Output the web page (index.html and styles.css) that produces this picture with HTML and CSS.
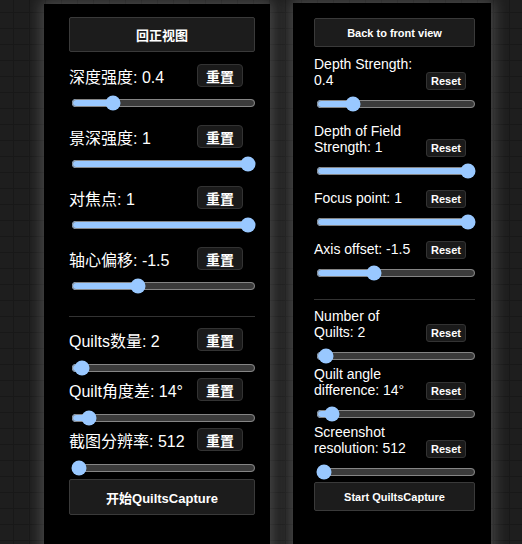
FILE: index.html
```html
<!DOCTYPE html>
<html lang="zh">
<head>
<meta charset="utf-8">
<title>Quilts</title>
<link rel="stylesheet" href="styles.css">
</head>
<body>
<div class="stage">
  <div class="panel panel-zh">
    <button class="wide-btn">回正视图</button>
    <div class="section-a">
      <div class="group">
        <div class="row"><span class="label">深度强度: 0.4</span><button class="reset">重置</button></div>
        <input class="range" type="range" min="0" max="2" step="0.1" value="0.4">
      </div>
      <div class="group">
        <div class="row"><span class="label">景深强度: 1</span><button class="reset">重置</button></div>
        <input class="range" type="range" min="0" max="1" step="0.1" value="1">
      </div>
      <div class="group">
        <div class="row"><span class="label">对焦点: 1</span><button class="reset">重置</button></div>
        <input class="range" type="range" min="0" max="1" step="0.1" value="1">
      </div>
      <div class="group">
        <div class="row"><span class="label">轴心偏移: -1.5</span><button class="reset">重置</button></div>
        <input class="range" type="range" min="-5" max="5" step="0.1" value="-1.5">
      </div>
    </div>
    <hr class="sep">
    <div class="section-b">
      <div class="group">
        <div class="row"><span class="label">Quilts数量: 2</span><button class="reset">重置</button></div>
        <input class="range" type="range" min="1" max="60" step="1" value="2">
      </div>
      <div class="group">
        <div class="row"><span class="label">Quilt角度差: 14°</span><button class="reset">重置</button></div>
        <input class="range" type="range" min="10" max="80" step="1" value="14">
      </div>
      <div class="group">
        <div class="row"><span class="label">截图分辨率: 512</span><button class="reset">重置</button></div>
        <input class="range" type="range" min="512" max="4096" step="64" value="512">
      </div>
    </div>
    <button class="wide-btn start">开始QuiltsCapture</button>
  </div>

  <div class="panel panel-en">
    <button class="wide-btn">Back to front view</button>
    <div class="section-a">
      <div class="group">
        <div class="row"><span class="label">Depth Strength: 0.4</span><button class="reset">Reset</button></div>
        <input class="range" type="range" min="0" max="2" step="0.1" value="0.4">
      </div>
      <div class="group">
        <div class="row"><span class="label">Depth of Field Strength: 1</span><button class="reset">Reset</button></div>
        <input class="range" type="range" min="0" max="1" step="0.1" value="1">
      </div>
      <div class="group">
        <div class="row"><span class="label">Focus point: 1</span><button class="reset">Reset</button></div>
        <input class="range" type="range" min="0" max="1" step="0.1" value="1">
      </div>
      <div class="group">
        <div class="row"><span class="label">Axis offset: -1.5</span><button class="reset">Reset</button></div>
        <input class="range" type="range" min="-5" max="5" step="0.1" value="-1.5">
      </div>
    </div>
    <hr class="sep">
    <div class="section-b">
      <div class="group">
        <div class="row"><span class="label">Number of Quilts: 2</span><button class="reset">Reset</button></div>
        <input class="range" type="range" min="1" max="60" step="1" value="2">
      </div>
      <div class="group">
        <div class="row"><span class="label">Quilt angle difference: 14°</span><button class="reset">Reset</button></div>
        <input class="range" type="range" min="10" max="80" step="1" value="14">
      </div>
      <div class="group">
        <div class="row"><span class="label">Screenshot resolution: 512</span><button class="reset">Reset</button></div>
        <input class="range" type="range" min="512" max="4096" step="64" value="512">
      </div>
    </div>
    <button class="wide-btn start">Start QuiltsCapture</button>
  </div>
</div>
</body>
</html>
```

FILE: styles.css
```css
html, body {
  margin: 0;
  height: 100%;
}

body {
  overflow: hidden;
  background-color: #1e1e1e;
  background-image:
    linear-gradient(#181818 1px, transparent 1px),
    linear-gradient(90deg, #181818 1px, transparent 1px);
  background-size: 16px 16px;
  background-position: 13px 12px;
  font-family: "Liberation Sans", "Noto Sans CJK SC", sans-serif;
  color: #fff;
}

.stage {
  display: flex;
  align-items: flex-start;
  gap: 23px;
  padding: 3px 0 0 44px;
}

.panel {
  background: #000;
  box-shadow: 0 0 14px 3px rgba(255, 255, 255, 0.2);
  height: 560px;
  box-sizing: border-box;
  display: flex;
  flex-direction: column;
  flex: none;
}

.panel-zh {
  width: 226px;
  margin-top: 1px;
  padding: 13px 15px 0 25px;
}

.panel-en {
  width: 198px;
  padding: 15px 16px 0 21px;
}

.wide-btn {
  display: block;
  width: 100%;
  box-sizing: border-box;
  background: #1c1c1c;
  border: 1px solid #3a3a3a;
  border-radius: 2px;
  color: #fff;
  font-family: inherit;
  font-weight: bold;
  padding: 0;
  flex: none;
}

.panel-zh .wide-btn {
  height: 35px;
  font-size: 13px;
}

.panel-en .wide-btn {
  height: 29px;
  font-size: 11px;
}

.section-a,
.section-b {
  display: flex;
  flex-direction: column;
}

.panel-zh .section-a {
  margin-top: 12px;
  gap: 12px;
}

.panel-en .section-a {
  margin-top: 9px;
  gap: 9px;
}

.row {
  display: flex;
  gap: 10px;
}

.panel-zh .row {
  align-items: center;
  height: 23px;
  padding-right: 12px;
}

.panel-en .row {
  align-items: last baseline;
  padding-right: 9px;
}

.label {
  flex: 1;
  min-width: 0;
}

.panel-zh .label {
  font-size: 16px;
}

.panel-en .label {
  font-size: 14px;
  line-height: 16px;
}

.reset {
  flex: none;
  box-sizing: border-box;
  background: #1a1a1a;
  border: 1px solid #333;
  color: #fff;
  font-family: inherit;
  font-weight: bold;
  padding: 0;
}

.panel-zh .reset {
  height: 23px;
  padding: 0 8px;
  font-size: 14px;
  border-radius: 4px;
}

.panel-en .reset {
  height: 18px;
  padding: 0 4px;
  font-size: 11px;
  border-radius: 3px;
}

.range {
  display: block;
  height: 16px;
  margin: 2px 0 2px 2px;
  width: calc(100% - 1px);
  color-scheme: dark;
}

.panel-zh .section-a .range {
  margin-top: 8px;
}

.panel-zh .section-b .range {
  margin-top: 9px;
}

.panel-en .range {
  margin-top: 6px;
}

.sep {
  border: none;
  border-top: 1px solid #333;
  width: 100%;
  flex: none;
}

.panel-zh .sep {
  margin: 20px 0 11px;
}

.panel-en .sep {
  margin: 16px 0 8px;
}

.panel-zh .start {
  margin-top: 1px;
  height: 36px;
}

.panel-en .start {
  margin-top: 0;
}
```
